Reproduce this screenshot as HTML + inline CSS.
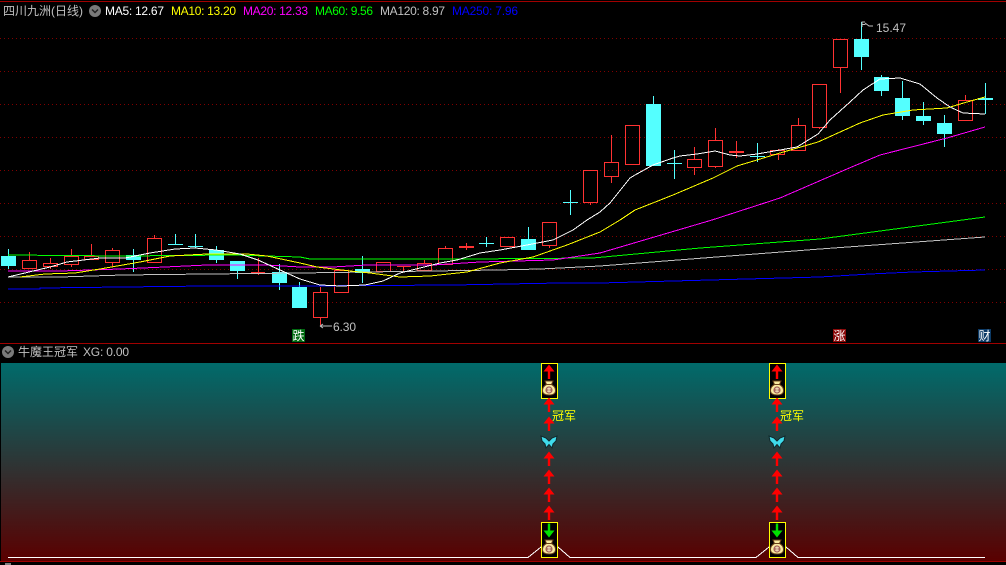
<!DOCTYPE html>
<html>
<head>
<meta charset="utf-8">
<style>
html,body{margin:0;padding:0;background:#000;width:1006px;height:565px;overflow:hidden}
svg{display:block;position:absolute;left:0;top:0}
text{font-family:"Liberation Sans","Noto Sans CJK SC","WenQuanYi Zen Hei",sans-serif;font-size:12px}
</style>
</head>
<body>
<svg width="1006" height="565" viewBox="0 0 1006 565" xmlns="http://www.w3.org/2000/svg">
<defs>
<linearGradient id="bg" x1="0" y1="0" x2="0" y2="1">
<stop offset="0" stop-color="#006b6b"/>
<stop offset="1" stop-color="#5a0000"/>
</linearGradient>
<g id="bag">
<path d="M-4 -8H4L2.500 -4.500C5 -3.200 6.500 -1 6.500 1.500C6.500 4.800 3.800 6 0 6S-6.500 4.800 -6.500 1.500C-6.500 -1 -5 -3.200 -2.500 -4.500Z" fill="#f8eaa0" stroke="#6a4018" stroke-width="1"/>
<path d="M-2.500 -4.500H2.500" stroke="#6a4018" stroke-width="1"/>
<circle cx="0" cy="1" r="3.600" fill="#a5625a"/>
<path d="M-1.800 -.6h3.600M-1.800 1h3.600M-1.800 2.600h3.600M0 -1.800v5.600" stroke="#f6e9c0" stroke-width=".8" fill="none"/>
</g>
<path id="up" d="M0 -7.500L5.500 -.5H1.200V7H-1.200V-.5H-5.500Z" fill="#ff0000"/>
<g id="fly">
<path d="M0 -1L-3 -4L-8 -6L-7 -1L-4 2L-3 6L0 2.500L3 6L4 2L7 -1L8 -6L3 -4Z" fill="#3fdcec" stroke="#10282c" stroke-width="1"/>
</g>
</defs>

<rect width="1006" height="565" fill="#000"/>
<!-- frame lines -->
<rect x="0" y="1" width="1006" height="1" fill="#a00000"/>
<rect x="0" y="343" width="1006" height="1" fill="#a00000"/>
<rect x="1" y="363" width="1005" height="198" fill="url(#bg)"/>
<rect x="0" y="561" width="1006" height="1" fill="#a00000"/>
<rect x="5" y="563" width="6" height="2" fill="#808080"/>

<!-- dotted grid -->
<path shape-rendering="crispEdges" d="M0 38.500H1006M0 71.500H1006M0 104.500H1006M0 137.500H1006M0 170.500H1006M0 203.500H1006M0 236.500H1006M0 269.500H1006M0 302.500H1006" stroke="#800000" stroke-width="1" stroke-dasharray="1 3" fill="none"/>

<!-- header -->
<text x="3" y="15" fill="#c0c0c0" textLength="80">四川九洲(日线)</text>
<circle cx="95" cy="11" r="6" fill="#7a7a7a"/>
<path d="M92 9.500l3 3 3-3" stroke="#222" stroke-width="1.500" fill="none"/>
<text x="105" y="15" fill="#ffffff" textLength="59">MA5: 12.67</text>
<text x="171" y="15" fill="#ffff00" textLength="65">MA10: 13.20</text>
<text x="243" y="15" fill="#ff00ff" textLength="65">MA20: 12.33</text>
<text x="315" y="15" fill="#00ff00" textLength="58">MA60: 9.56</text>
<text x="380" y="15" fill="#c0c0c0" textLength="65">MA120: 8.97</text>
<text x="452" y="15" fill="#0000ff" textLength="66">MA250: 7.96</text>

<!-- red candles -->
<path shape-rendering="crispEdges" fill="none" stroke="#ff3232" stroke-width="1" d="
M22.500 260.500h14v8h-14zM29.500 252v8
M43.500 263.500h14v3h-14zM50.500 258v5M50.500 267v2
M64.500 256.500h14v8h-14zM71.500 249v7M71.500 265v2
M84.500 256.500h14v3h-14zM91.500 244v12
M105.500 250.500h14v12h-14zM112.500 248v2M112.500 263v4
M147.500 238.500h14v24h-14zM154.500 235v3
M251 272.500h14M258.500 258v17
M313.500 292.500h14v25h-14zM320.500 287v5M320.500 318v7
M334.500 270.500h14v22h-14z
M376.500 262.500h14v9h-14z
M397 266.500h14M403.500 266v5
M417.500 263.500h14v7h-14zM424.500 260v3
M438.500 248.500h14v16h-14zM445.500 246v2
M459 246.500h15M459 247.500h15M466.500 243v7
M500.500 237.500h14v9h-14z
M542.500 222.500h14v23h-14zM549.500 246v2
M583.500 170.500h14v32h-14zM590.500 203v2
M604.500 162.500h14v14h-14zM611.500 135v27M611.500 177v6
M625.500 125.500h14v39h-14z
M687.500 159.500h14v8h-14zM694.500 147v12M694.500 168v7
M708.500 140.500h14v26h-14zM715.500 128v12M715.500 167v1
M729 151.500h15M729 152.500h15M736.500 141v17
M770.500 150.500h14v4h-14zM778.500 149v1M778.500 155v5
M791.500 125.500h14v25h-14zM798.500 118v7
M812.500 84.500h14v43h-14zM819.500 128v1
M833.500 39.500h14v28h-14zM840.500 68v25
M958.500 100.500h14v20h-14zM965.500 95v5
"/>

<!-- cyan candles -->
<path shape-rendering="crispEdges" fill="#54ffff" d="
M1 256h15v10h-15z
M126 255h15v5h-15z
M209 250h15v10h-15z
M230 261h15v10h-15z
M272 272h15v11h-15z
M292 287h15v21h-15z
M355 269h15v4h-15z
M521 239h15v11h-15z
M646 104h15v62h-15z
M854 39h15v18h-15z
M874 77h15v14h-15z
M895 98h15v18h-15z
M916 116h15v5h-15z
M937 123h15v11h-15z
M978 98h15v2h-15z
"/>
<path shape-rendering="crispEdges" fill="none" stroke="#54ffff" stroke-width="1" d="
M8.500 249v20
M133.500 249v23
M168 244.500h15M175.500 234v10
M188 246.500h15M195.500 234v14
M216.500 246v17
M237.500 271v8
M279.500 264v26
M299.500 282v5
M362.500 256v27
M479 243.500h15M486.500 237v10
M528.500 227v12
M563 202.500h15M570.500 190v25
M653.500 96v8
M667 163.500h15M674.500 150v29
M750 156.500h15M757.500 143v19
M861.500 22v48
M881.500 75v21
M902.500 81v39
M923.500 102v23
M944.500 115v32
M985.500 83v31
"/>

<!-- moving averages -->
<g fill="none" stroke-width="1" shape-rendering="crispEdges">
<polyline stroke="#0000ff" points="8,289 40,289 40,288 123,287 207,286 300,286 453,285 560,283 600,283 820,277 870,274 913,272 985,270"/>
<polyline stroke="#c0c0c0" points="8,277 60,277 123,275 207,274 300,273 367,272 497,270 540,269 600,266 820,249 985,237"/>
<polyline stroke="#00ff00" points="8,255 123,256 233,255 300,257 310,259 467,259 593,258 700,248 820,239 985,217"/>
<polyline stroke="#ff00ff" points="8,271 60,271 120,269 165,267 207,265 267,265 300,267 333,267 367,265 433,265 480,262 553,260 600,253 712,220 780,198 847,169 880,155 947,138 985,127"/>
<polyline stroke="#ffff00" points="20,277 45,274 75,273 100,269 140,262 170,256 207,254 247,254 267,256 300,263 317,267 350,271 370,273 400,277 430,276 467,272 500,263 533,257 567,245 600,232 620,220 635,210 673,195 713,178 737,166 780,153 818,142 860,123 883,115 913,110 947,108 967,102 985,97"/>
<polyline stroke="#ffffff" points="8,277 29,272 50,267 67,262 100,258 125,258 150,253 175,249 195,248 216,250 240,254 258,260 280,270 300,279 320,285 341,286 365,285 383,281 400,273 420,268 440,263 457,260 480,253 500,250 527,245 553,240 573,230 587,220 600,212 610,203 630,178 635,175 653,165 673,158 680,156 697,154 715,151 730,155 740,156 757,154 780,150 797,147 818,134 830,120 850,102 863,90 880,79 900,78 920,84 937,98 950,107 963,113 985,114"/>
</g>

<!-- extreme price markers -->
<path d="M862 27V22h3M862.500 24.500h3M865 23l4 3h4" stroke="#c0c0c0" stroke-width="1" fill="none"/>
<text x="876" y="32" fill="#c0c0c0" textLength="30">15.47</text>
<path d="M320 326h12M320 326l3-2M320 326l3 2" stroke="#c0c0c0" stroke-width="1" fill="none"/>
<text x="333" y="331" fill="#c0c0c0" textLength="23">6.30</text>

<!-- badges -->
<rect x="292" y="329" width="13" height="13" fill="#006a10"/>
<text x="292.500" y="340" fill="#ffffff">跌</text>
<rect x="833" y="329" width="13" height="13" fill="#8a0a0a"/>
<text x="833.500" y="340" fill="#ffffff">涨</text>
<rect x="978" y="329" width="13" height="13" fill="#0c3a66"/>
<text x="978.500" y="340" fill="#ffffff">财</text>

<!-- lower header -->
<circle cx="8" cy="352" r="6" fill="#7a7a7a"/>
<path d="M5 350.500l3 3 3-3" stroke="#222" stroke-width="1.500" fill="none"/>
<text x="18" y="356" fill="#c0c0c0" textLength="60">牛魔王冠军</text>
<text x="83" y="356" fill="#c0c0c0" textLength="46">XG: 0.00</text>

<!-- lower white baseline -->
<polyline fill="none" stroke="#ffffff" stroke-width="1" shape-rendering="crispEdges" points="8,557.500 528,557.500 541,547 558,547 570,557.500 756,557.500 769,547 786,547 798,557.500 985,557.500"/>

<!-- signal column 1 -->
<g>
<rect x="541.500" y="363.500" width="16" height="35" fill="#000" stroke="#ffff00"/>
<use href="#up" x="549" y="372"/>
<use href="#bag" x="549" y="389"/>
<use href="#up" x="549" y="405"/>
<use href="#up" x="549" y="424"/>
<use href="#fly" x="549" y="442"/>
<use href="#up" x="549" y="459"/>
<use href="#up" x="549" y="477"/>
<use href="#up" x="549" y="495"/>
<use href="#up" x="549" y="513"/>
<rect x="541.500" y="522.500" width="16" height="35" fill="#000" stroke="#ffff00"/>
<path d="M549 537.500L543.500 530.500H547.800V523.500H550.200V530.500H554.500Z" fill="#00e000"/>
<use href="#bag" x="549" y="548"/>
<text x="552" y="420" fill="#ffff00">冠军</text>
</g>
<!-- signal column 2 -->
<g>
<rect x="769.500" y="363.500" width="16" height="35" fill="#000" stroke="#ffff00"/>
<use href="#up" x="777" y="372"/>
<use href="#bag" x="777" y="389"/>
<use href="#up" x="777" y="405"/>
<use href="#up" x="777" y="424"/>
<use href="#fly" x="777" y="442"/>
<use href="#up" x="777" y="459"/>
<use href="#up" x="777" y="477"/>
<use href="#up" x="777" y="495"/>
<use href="#up" x="777" y="513"/>
<rect x="769.500" y="522.500" width="16" height="35" fill="#000" stroke="#ffff00"/>
<path d="M777 537.500L771.500 530.500H775.800V523.500H778.200V530.500H782.500Z" fill="#00e000"/>
<use href="#bag" x="777" y="548"/>
<text x="780" y="420" fill="#ffff00">冠军</text>
</g>
</svg>
</body>
</html>
